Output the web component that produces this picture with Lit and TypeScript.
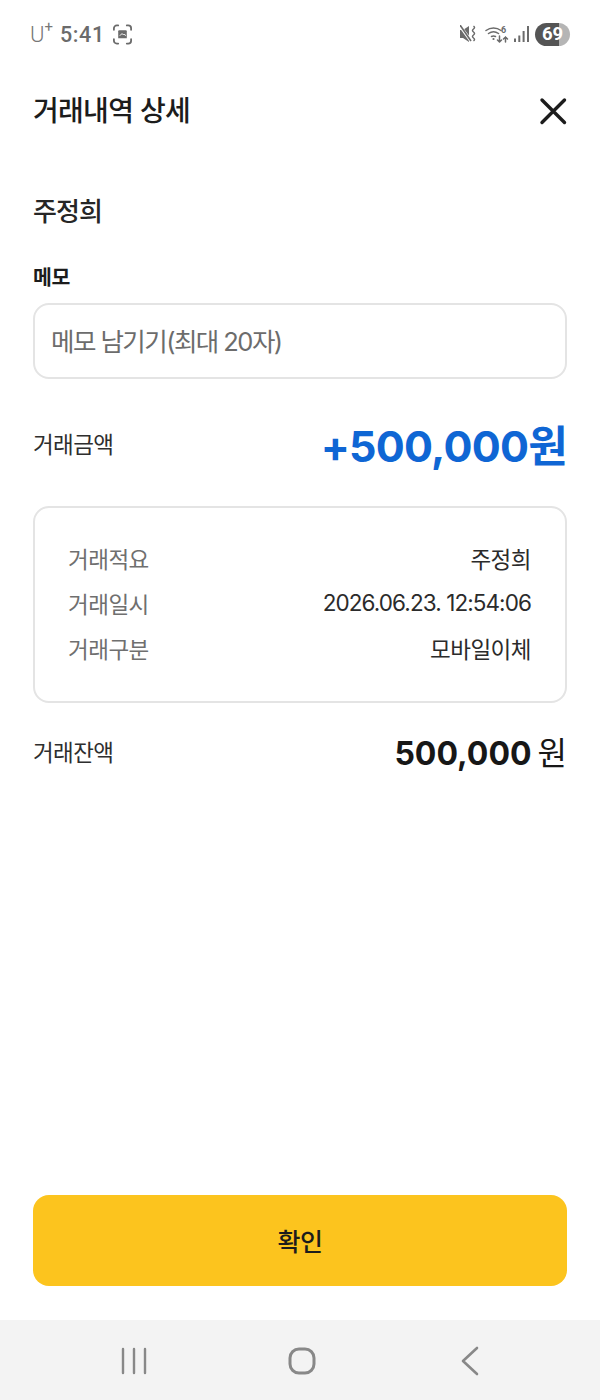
import { LitElement, html, css } from "lit";
import { customElement } from "lit/decorators.js";

@customElement("app-root")
export class AppRoot extends LitElement {
  static styles = css`
    :host {
      display: block;
      width: 600px;
      height: 1400px;
      background: #fff;
      font-family: "Inter", "Noto Sans CJK KR", sans-serif;
      color: #1c1c1c;
      overflow: hidden;
    }
    .page { display: flex; flex-direction: column; height: 1400px; }
    .status {
      height: 68px; display: flex; align-items: center; justify-content: space-between;
      padding: 0 30px; box-sizing: border-box; color: #6f6f6f;
    }
    .status-left, .status-right { display: flex; align-items: center; }
    .carrier { font: 300 22px "Roboto", sans-serif; color: #777; display: flex; align-items: flex-start; }
    .carrier sup { font-size: 15px; line-height: 13px; margin-top: -1px; font-weight: 400; }
    .time { font: 500 21.5px "Roboto", sans-serif; margin-left: 7px; letter-spacing: 0.6px; color: #6b6b6b; }
    .shot { margin-left: 7px; }
    .mute { margin-right: 8px; }
    .signal { margin: 0 6px 0 5px; }
    .batt {
      width: 35px; height: 23px; border-radius: 12px;
      background: linear-gradient(90deg, #555 0 69%, #b5b5b5 69% 100%);
      color: #fff; font: 700 18.5px "Roboto", sans-serif; display: flex; align-items: center; justify-content: center;
    }
    .header {
      display: flex; justify-content: space-between; align-items: center;
      padding: 0 32px 0 33px; height: 86px;
    }
    h1 { margin: 0 0 5px; font-size: 28px; font-weight: 500; letter-spacing: -0.7px; color: #1c1c1c; }
    .content { padding: 0 33px; display: flex; flex-direction: column; flex: 1; }
    .name { font-size: 26px; font-weight: 500; letter-spacing: -0.9px; margin-top: 38px; line-height: 40px; color: #262626; }
    .memo-label { font-size: 20.5px; font-weight: 700; margin-top: 31px; line-height: 30px; letter-spacing: -0.4px; color: #1c1c1c; }
    .memo {
      margin-top: 10px; height: 76px; box-sizing: border-box; border: 2px solid #e4e4e4; border-radius: 16px;
      display: flex; align-items: center; padding: 0 0 3px 16px; font-size: 25.5px; letter-spacing: -1.55px; color: #6c6c6c;
    }
    .row { display: flex; justify-content: space-between; align-items: center; }
    .amount-row { margin-top: 31px; height: 66px; }
    .label { font-size: 22.5px; letter-spacing: -0.6px; color: #2e2e2e; }
    .amount { font-size: 43px; font-weight: 700; color: #0f66d4; letter-spacing: -0.75px; }
    .card {
      margin-top: 30px; height: 197px; box-sizing: border-box; border: 2px solid #e4e4e4; border-radius: 16px;
      padding: 27px 34px 27px 33px; display: flex; flex-direction: column;
    }
    .card .row { height: 45px; font-size: 22.5px; letter-spacing: -0.5px; }
    .card .k { color: #6f6f6f; }
    .card .v { color: #2b2b2b; }
    .card .date { letter-spacing: -0.92px; }
    .balance-row { margin-top: 18px; height: 60px; }
    .balance { font-size: 32px; font-weight: 700; color: #171717; display: flex; align-items: baseline; gap: 6px; }
    .balance span { font-weight: 400; }
    .spacer { flex: 1; }
    .btn {
      height: 91px; box-sizing: border-box; padding-bottom: 2px; border-radius: 16px; background: #fcc41e;
      display: flex; align-items: center; justify-content: center;
      font-size: 25px; font-weight: 500; color: #1c1c1c; margin: 0 0 34px; letter-spacing: -0.4px;
    }
    .nav {
      height: 80px; background: #f3f3f3; display: flex; align-items: center; justify-content: space-between;
      padding: 2px 120px 0 120px; box-sizing: border-box;
    }
    .home { margin-right: 4px; }
    svg { display: block; }
  `;

  render() {
    return html`<div class="page">
      <div class="status">
        <div class="status-left">
          <div class="carrier">U<sup>+</sup></div>
          <div class="time">5:41</div>
          <svg class="shot" width="21" height="21" viewBox="0 0 22 22" fill="none" stroke="#6b6b6b" stroke-width="1.900" stroke-linecap="round">
            <path d="M2 6V4.500a3 3 0 0 1 3-3h1.500M15.500 1.500H17a3 3 0 0 1 3 3V6M20 16v1.500a3 3 0 0 1-3 3h-1.500M6.500 20.500H5a3 3 0 0 1-3-3V16"/>
            <path d="M6.500 7.500a1 1 0 0 1 1-1h7a1 1 0 0 1 1 1v7.500h-9z" fill="#6b6b6b" stroke="none"/>
            <path d="M8.500 12l2-2 1.500 1.500 1-1 1 1.500" stroke="#fff" stroke-width="1"/>
          </svg>
        </div>
        <div class="status-right">
          <svg class="mute" width="17" height="18" viewBox="0 0 17 18" fill="#6b6b6b">
            <path d="M0 5h3l6-4v16l-6-4H0z"/>
            <path d="M0 1l11 15" stroke="#fff" stroke-width="3"/>
            <path d="M0 0l11 16" stroke="#6b6b6b" stroke-width="1.600"/>
            <path d="M13.500 1q2 1.500 0 3t0 3 0 3 0 3 0 3" fill="none" stroke="#6b6b6b" stroke-width="1.500"/>
          </svg>
          <svg width="24" height="18" viewBox="0 0 24 18" fill="none" stroke="#6b6b6b" stroke-width="1.500" stroke-linecap="round">
            <path d="M1 5.500a13 13 0 0 1 15 0M3.500 8.500a9 9 0 0 1 10 0M6.500 11.500a4.500 4.500 0 0 1 4 0"/>
            <circle cx="8.500" cy="14" r="1.100" fill="#6b6b6b" stroke="none"/>
            <path d="M14.500 11v6M12.500 15l2 2 2-2M20.500 17v-5M18.500 14l2-2 2 2"/>
            <text x="16" y="8" font-size="9" font-family="Roboto" fill="#6b6b6b" stroke="none" font-weight="700">6</text>
          </svg>
          <svg class="signal" width="15" height="17" viewBox="0 0 15 17" fill="#6b6b6b">
            <rect x="0" y="12.500" width="2" height="3.500"/>
            <rect x="4.300" y="9.500" width="2" height="6.500"/>
            <rect x="8.600" y="5" width="2" height="11"/>
            <rect x="13" y="0" width="2" height="16"/>
          </svg>
          <div class="batt">69</div>
        </div>
      </div>
      <div class="header">
        <h1>거래내역 상세</h1>
        <svg width="30" height="30" viewBox="0 0 30 30" stroke="#1c1c1c" stroke-width="3.400" stroke-linecap="round">
          <path d="M4 4l22.500 22.500M26.500 4L4 26.500"/>
        </svg>
      </div>
      <div class="content">
        <div class="name">주정희</div>
        <div class="memo-label">메모</div>
        <div class="memo">메모 남기기(최대 20자)</div>
        <div class="row amount-row">
          <span class="label">거래금액</span>
          <span class="amount">+500,000원</span>
        </div>
        <div class="card">
          <div class="row"><span class="k">거래적요</span><span class="v">주정희</span></div>
          <div class="row"><span class="k">거래일시</span><span class="v date">2026.06.23. 12:54:06</span></div>
          <div class="row"><span class="k">거래구분</span><span class="v">모바일이체</span></div>
        </div>
        <div class="row balance-row">
          <span class="label">거래잔액</span>
          <span class="balance">500,000 <span>원</span></span>
        </div>
        <div class="spacer"></div>
        <div class="btn">확인</div>
      </div>
      <div class="nav">
        <svg width="28" height="28" viewBox="0 0 28 28" stroke="#888" stroke-width="2.400" stroke-linecap="round">
          <path d="M3 2v24M14 2v24M25 2v24"/>
        </svg>
        <svg class="home" width="28" height="28" viewBox="0 0 28 28" fill="none" stroke="#888" stroke-width="3">
          <rect x="2" y="2" width="24" height="24" rx="9"/>
        </svg>
        <svg width="20" height="30" viewBox="0 0 20 30" fill="none" stroke="#888" stroke-width="2.600" stroke-linecap="round" stroke-linejoin="round">
          <path d="M17 2L3 15l14 13"/>
        </svg>
      </div>
    </div>`;
  }
}
